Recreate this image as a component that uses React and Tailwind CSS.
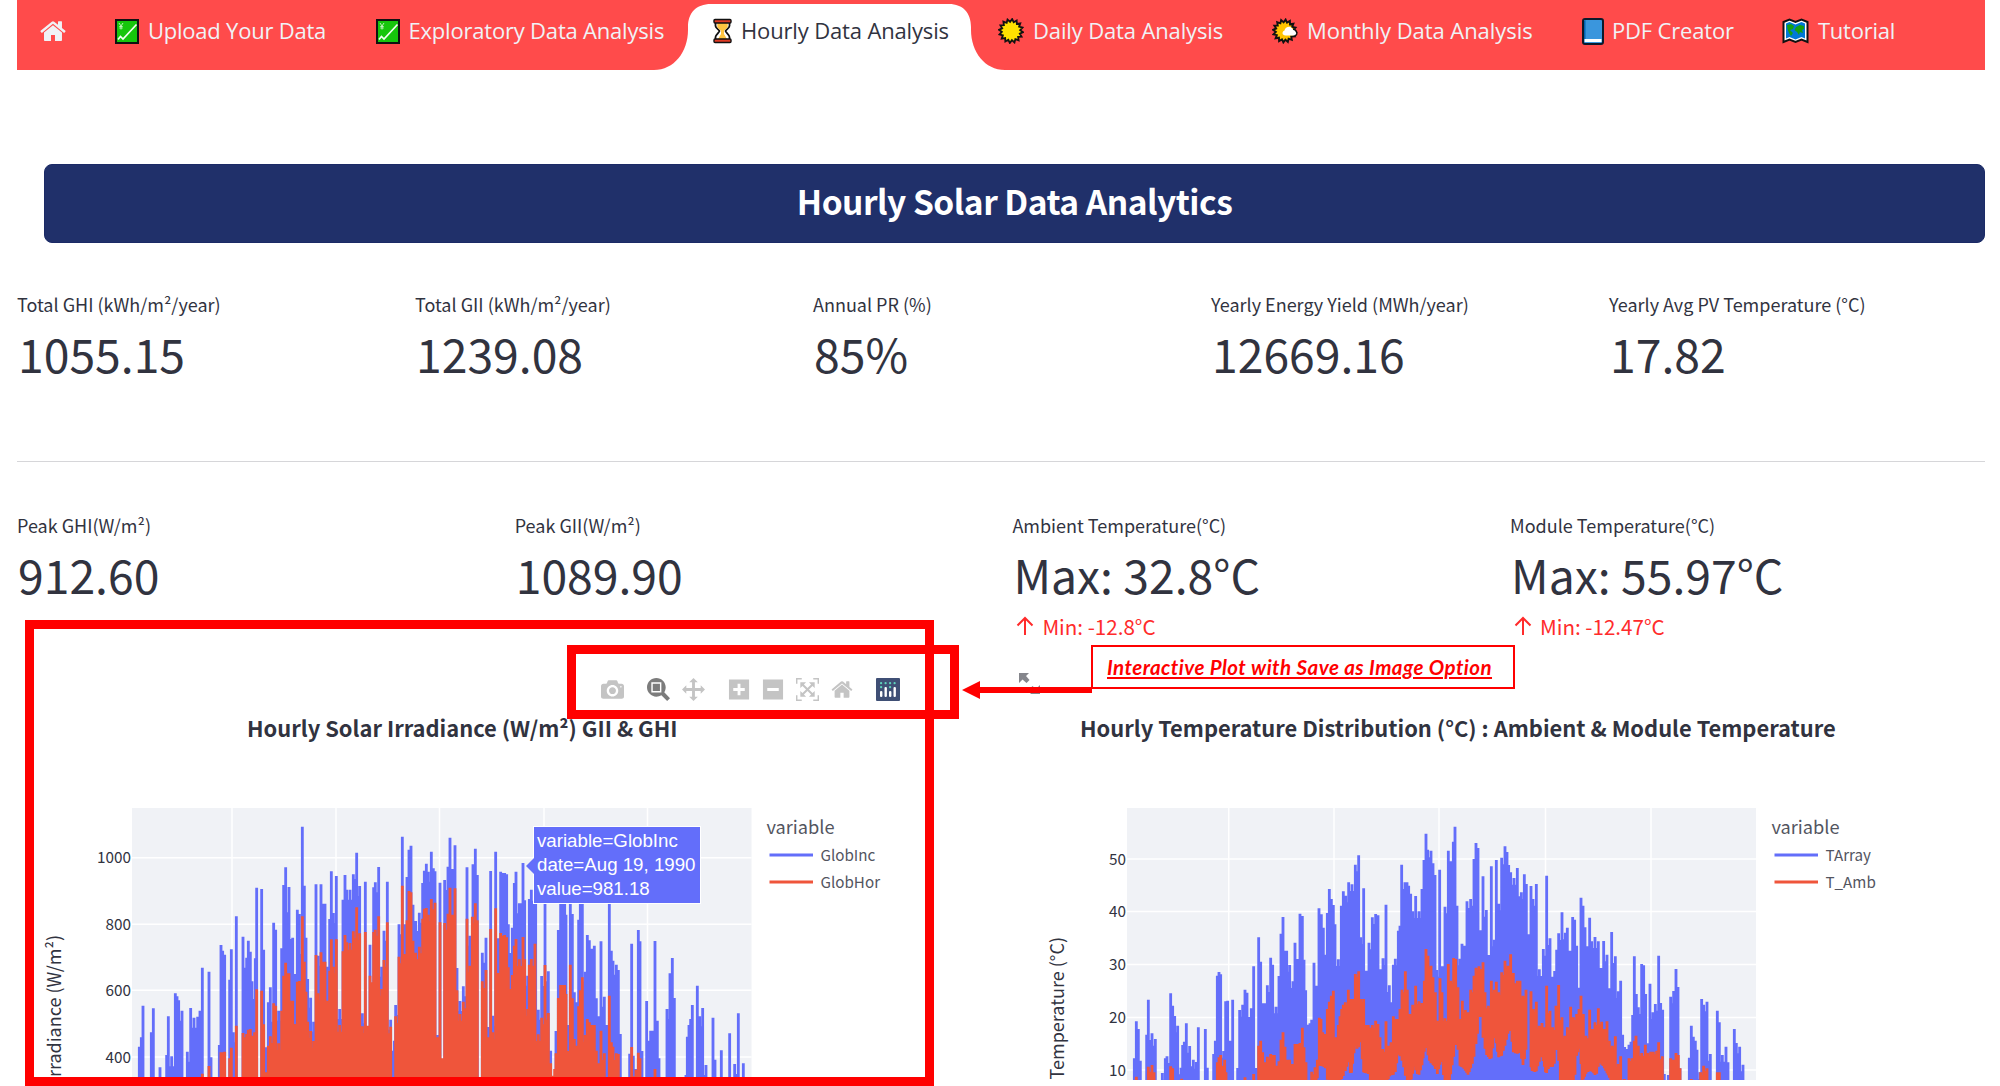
import React from "react";

const CJK = "font-['Noto_Sans_CJK_SC',sans-serif]";

function ChartIcon() {
  return (
    <svg width="24" height="25" viewBox="0 0 24 25">
      <rect x="1" y="1" width="22" height="23" fill="#16c60c" stroke="#111" strokeWidth="2" />
      <path d="M3 20.500 5.500 17.500 8 20 21.500 5.500" fill="none" stroke="#f4fff4" strokeWidth="1.700" />
      <path d="M4 4 6 7 8 4M6 7V10.500M4.300 7.500H7.700M4.300 9H7.700" fill="none" stroke="#c9f5c6" strokeWidth="0.900" />
    </svg>
  );
}

function HourglassIcon() {
  return (
    <svg width="19" height="26" viewBox="0 0 19 26">
      <path d="M2.500 4V8C2.500 10 6.500 12 6.500 13S2.500 17 2.500 19V22H16.500V19C16.500 17 12.500 14 12.500 13S16.500 10 16.500 8V4Z" fill="#fff" stroke="#111" strokeWidth="1.800" />
      <path d="M4.300 5H14.700V8.500C14.500 10.500 11 12 11 13V16L14 21H5L8 16V13C8 12 4.500 10.500 4.300 8.500Z" fill="#ffc440" />
      <rect x="1" y="1.500" width="17" height="3.500" rx="1" fill="#e03a24" stroke="#111" strokeWidth="1.400" />
      <rect x="1" y="21" width="17" height="3.500" rx="1" fill="#e03a24" stroke="#111" strokeWidth="1.400" />
    </svg>
  );
}

function burst(cx, cy, outer, inner, n) {
  const pts = [];
  for (let i = 0; i < n * 2; i++) {
    const r = i % 2 ? inner : outer;
    const a = (Math.PI * (i + 0.5)) / n - Math.PI / 2;
    pts.push(`${(cx + r * Math.cos(a)).toFixed(2)},${(cy + r * Math.sin(a)).toFixed(2)}`);
  }
  return pts.join(" ");
}

function SunIcon() {
  return (
    <svg width="26" height="26" viewBox="0 0 26 26">
      <polygon points={burst(13, 13, 12, 9.2, 16)} fill="#ffe100" stroke="#111" strokeWidth="1.800" />
    </svg>
  );
}

function SunCloudIcon() {
  return (
    <svg width="27" height="26" viewBox="0 0 27 26">
      <polygon points={burst(12.5, 13, 11.5, 8.700, 16)} fill="#ffc400" stroke="#111" strokeWidth="1.900" />
      <path d="M13.500 17.500C10 17.500 9.500 13.500 12.500 12.500C13 8.500 19 7 20.500 11C25 11 26.500 17.500 22.500 17.500Z" fill="#fff" />
      <path d="M21 11C25 11.500 26.500 17.500 22.500 17.800" fill="none" stroke="#111" strokeWidth="1.400" />
    </svg>
  );
}

function BookIcon() {
  return (
    <svg width="22" height="27" viewBox="0 0 22 27">
      <rect x="1" y="1" width="20" height="25" rx="2" fill="#3a96dd" stroke="#0b1a2b" strokeWidth="2" />
      <path d="M2 3V24H3.500V2Z" fill="#0063b1" />
      <rect x="2.500" y="21" width="17" height="3" fill="#fff" />
    </svg>
  );
}

function MapIcon() {
  return (
    <svg width="27" height="26" viewBox="0 0 27 26">
      <path d="M1.500 4 7.500 1.500 13.500 4 19.500 1.500 25.500 4V24L19.500 21.500 13.500 24 7.500 21.500 1.500 24Z" fill="#fff" stroke="#111" strokeWidth="2" />
      <path d="M4 5.500 7.500 4 13.500 6.500 19.500 4 23 5.500V20.500L19.500 19 13.500 21.500 7.500 19 4 20.500Z" fill="#0078d7" />
      <path d="M5 7 9 6 12 8 11 11 8 12 11 15 9 18 7 15 5.500 11ZM14 9 18 7 22 8V11L20 12 21 15 18 14 17 17 15 14 12.500 12Z" fill="#16a010" />
    </svg>
  );
}

const HOME =
  "m786 296v-267q0-15-11-26t-25-10h-214v214h-143v-214h-214q-15 0-25 10t-11 26v267q0 1 0 2t0 2l321 264 321-264q1-1 1-4z m124 39l-34-41q-5-5-12-6h-2q-7 0-12 3l-386 322-386-322q-7-4-13-4-7 2-12 7l-35 41q-4 5-3 13t6 12l401 334q18 15 42 15t43-15l136-114v109q0 8 5 13t13 5h107q8 0 13-5t5-13v-227l122-102q5-5 6-12t-4-13z";

const tabText = "relative top-[-1px] font-['Open_Sans',sans-serif] text-[22px] whitespace-nowrap";

function Tab({ className, icon, gap, children }) {
  return (
    <div className={`flex h-[62px] items-center ${className}`}>
      <span className="shrink-0">{icon}</span>
      <span className={`${tabText} ${gap}`}>{children}</span>
    </div>
  );
}

function Nav() {
  return (
    <nav className="ml-[17px] flex h-[70px] w-[1968px] bg-[#ff4b4b] text-[#f0f2f6]">
      <div className="h-[62px] w-[73px] pt-[19px] pl-[23px]">
        <svg width="26" height="22" viewBox="0 60 930 800" preserveAspectRatio="none">
          <path d={HOME} transform="matrix(1 0 0 -1 0 850)" fill="#f0f2f6" />
        </svg>
      </div>
      <Tab className="w-[260px] pl-[25px]" gap="ml-[9px] tracking-[-0.230px]" icon={<ChartIcon />}>Upload Your Data</Tab>
      <Tab className="w-[338px] pl-[25.500px]" gap="ml-[9px] tracking-[-0.200px]" icon={<ChartIcon />}>Exploratory Data Analysis</Tab>
      <div className="relative h-[70px] w-[283px]">
        <svg className="absolute left-[-34px] top-0" width="351" height="70" viewBox="0 0 351 70">
          <path d="M0 70C20 70 34 52 34 30V27C34 13 42 4 57 4H295C309 4 317 13 317 27V30C317 52 331 70 351 70Z" fill="#fff" />
        </svg>
        <div className="relative text-[#31333f]">
          <Tab className="pl-[25px]" gap="ml-[9px] tracking-[-0.150px]" icon={<HourglassIcon />}>Hourly Data Analysis</Tab>
        </div>
      </div>
      <Tab className="w-[275px] pl-[27px]" gap="ml-[9px] tracking-[-0.140px]" icon={<SunIcon />}>Daily Data Analysis</Tab>
      <Tab className="w-[309px] pl-[26px]" gap="ml-[8px] tracking-[-0.060px]" icon={<SunCloudIcon />}>Monthly Data Analysis</Tab>
      <Tab className="w-[200px] pl-[27px]" gap="ml-[8px] tracking-[-0.180px]" icon={<BookIcon />}>PDF Creator</Tab>
      <Tab className="pl-[27px]" gap="ml-[9px] tracking-[-0.250px]" icon={<MapIcon />}>Tutorial</Tab>
    </nav>
  );
}

function Metric({ label, value, delta }) {
  return (
    <div className="text-[#31333f]">
      <div className="h-[28px] text-[18px] leading-[28px] whitespace-nowrap">{label}</div>
      <div className="mt-[5px] h-[60px] pl-[1px] text-[46.300px] leading-[60px] whitespace-nowrap">{value}</div>
      {delta && (
        <div className="flex items-center pt-[10px] pl-[4px] text-[#ff2b2b]">
          <svg width="18" height="20" viewBox="0 0 18 20">
            <path d="M9 19V2M1.500 9.500 9 2 16.500 9.500" fill="none" stroke="#ff2b2b" strokeWidth="2" />
          </svg>
          <span className="ml-[8px] text-[20.600px] leading-[24px] whitespace-nowrap">{delta}</span>
        </div>
      )}
    </div>
  );
}

const globIncA =
  "418:803 424:775 429:680 454:760 460:688 480:865 500:828 505:712 515:832 526:643 531:652 536:664 546:695 562:818 572:687 582:716 593:713 600:695 607:566 627:578 633:835 658:798 663:498 668:515 674:527 689:602 694:511 700:760 709:412 729:473 740:536 745:485 751:518 756:607 761:660 766:538 770:326 785:330 791:512 797:805 805:670 811:625 816:728 821:431 827:452 836:695 845:508 851:318 857:265 862:400 867:324 873:480 878:476 885:585 892:392 898:405 903:525 907:143 913:320 918:476 923:600 932:656 941:728 948:316 954:530 963:316 969:374 975:374 982:563 989:420 994:277 1000:402 1009:291 1019:690 1029:362 1035:288 1040:332 1050:332 1060:286 1065:300 1070:221 1079:321 1087:703 1096:308 1110:497 1116:765 1121:325 1126:310 1131:340 1136:264 1145:563 1152:455 1162:308 1172:722 1183:785 1187:678 1197:436 1207:173 1213:436 1221:294 1227:212 1233:200 1239:377 1247:426 1258:401 1268:312 1273:275 1279:254 1285:278 1294:218 1300:268 1305:277 1312:768 1320:311 ";
const globIncB =
  "14:303 24:263 30:176 38:270 45:199 51:567 60:666 70:622 81:265 90:470 99:256 106:209 112:288 127:521 138:476 146:744 152:276 158:710 167:218 174:478 182:278 188:282 194:282 200:286 205:436 209:522 217:446 223:312 228:278 238:373 243:373 249:252 254:364 263:590 268:360 274:332 281:365 287:365 295:692 305:591 315:365 325:577 332:815 348:756 355:453 362:360 368:355 374:365 378:407 385:738 391:365 397:405 403:640 416:422 421:365 427:365 436:578 442:468 448:484 456:509 463:500 469:658 477:712 483:487 493:653 500:738 508:360 514:515 519:545 529:557 535:573 541:765 569:824 575:494 580:830 588:870 595:453 600:487 606:816 620:666 632:755 638:755 645:486 652:725 657:838 681:690 690:583 697:537 703:657 738:888 742:773 747:738 752:720 757:678 772:620 779:712 788:687 798:858 819:716 825:842 844:814 869:763 884:855 895:703 910:853";
const globHorA =
  "607:884 627:861 663:820 668:820 674:818 689:838 694:806 709:740 729:762 735:775 740:765 745:752 751:750 757:770 764:760 770:631 785:635 791:736 797:880 805:800 811:772 821:673 827:680 836:793 845:695 851:590 857:551 862:583 867:583 873:665 878:665 885:735 892:608 898:606 907:412 913:548 918:638 923:728 932:756 941:786 948:528 954:643 963:520 969:548 975:548 982:665 989:575 994:481 1000:563 1009:481 1019:738 1029:517 1035:468 1040:490 1050:492 1060:457 1070:385 1079:463 1087:742 1096:459 1103:740 1110:590 1121:459 1126:452 1131:470 1136:412 1145:630 1152:543 1162:430 1172:743 1187:712 1197:533 1207:320 1213:525 1221:424 1227:336 1233:340 1239:485 1247:521 1258:503 1268:419 1273:389 1279:387 1285:407 1294:360 1305:371 1312:775 1320:430 1327:838 ";
const globHorB =
  "14:432 24:404 30:326 38:407 45:328 51:634 60:705 70:668 81:419 90:560 97:413 106:373 112:424 127:607 138:573 146:775 152:450 158:760 167:388 174:582 182:462 188:470 194:468 200:475 205:565 209:630 217:588 223:500 228:480 238:541 249:474 254:541 263:690 268:557 274:540 285:494 295:766 305:716 315:558 325:702 332:853 344:870 348:823 355:657 362:618 368:618 374:618 378:645 385:816 391:557 397:658 403:780 416:682 421:634 427:595 436:768 442:720 448:730 456:738 463:738 469:815 477:853 483:755 493:823 508:650 514:790 519:803 529:823 535:825 575:804 588:872 595:821 600:838 645:870";
const tArrayA =
  "313:838 319:727 325:750 331:845 350:767 355:662 366:763 376:780 397:882 406:838 411:832 422:643 428:680 434:711 443:740 453:866 458:798 463:788 469:733 479:801 490:842 499:849 505:745 526:750 532:866 551:825 556:785 562:590 567:579 572:586 581:816 587:667 593:665 601:785 608:662 623:867 629:693 638:677 645:632 651:641 657:714 664:688 671:562 678:867 686:475 692:548 698:673 706:673 712:619 722:536 728:557 738:683 747:591 753:464 759:414 764:515 770:515 779:558 789:607 795:491 802:540 810:404 817:411 822:542 827:634 835:737 840:733 845:722 852:551 860:620 867:388 874:406 880:446 886:527 892:402 898:330 904:360 910:378 915:436 925:541 934:380 940:337 947:350 956:310 966:316 976:257 986:229 992:475 1001:328 1009:575 1017:491 1027:415 1037:405 1044:409 1052:571 1059:538 1068:377 1078:619 1084:670 1090:557 1096:539 1105:455 1110:440 1115:257 1125:310 1131:310 1136:320 1142:344 1148:397 1157:351 1167:397 1176:330 1182:243 1188:164 1193:212 1203:215 1209:253 1215:288 1220:573 1229:272 1237:562 1245:383 1255:215 1262:247 1270:188 1275:143 1281:380 1290:539 1296:494 1303:500 1311:367 1322:360 1332:240 1338:192 1344:207 1351:454 1359:292 1369:393 1377:528 1384:262 1393:482 1399:243 1406:374 1415:236 1425:202 1431:219 1436:258 1442:280 1452:297 1462:267 1468:352 1474:340 1483:286 ";
const tArrayB =
  "139:315 145:466 153:321 159:360 169:315 178:571 190:510 200:290 210:478 217:593 224:576 230:512 236:463 246:400 256:461 262:446 270:515 278:414 284:422 290:500 296:626 303:356 309:380 315:445 321:502 329:416 335:487 345:474 355:487 363:567 371:486 381:527 388:628 395:459 406:532 415:637 422:605 428:767 434:804 440:810 447:797 453:788 458:708 463:532 469:645 475:685 485:555 491:559 497:645 502:793 510:614 519:700 526:675 536:530 542:672 548:692 553:885 565:888 572:653 581:636 588:570 594:624 600:868 628:836 634:740 640:773 646:785 651:812 660:880 665:660 671:677 681:668 691:825 712:695 718:730 727:828 738:803 744:850 763:750 769:792 779:803 789:857";
const tAmbA =
  "319:893 355:863 360:878 366:858 372:880 422:862 428:868 455:899 562:850 567:835 572:828 578:860 584:842 588:880 645:895 671:885 686:800 692:785 698:820 706:850 712:833 722:825 728:828 733:828 740:860 747:847 753:782 759:760 765:803 771:842 779:842 787:855 795:795 802:795 810:792 817:746 822:805 828:850 845:878 855:865 862:842 868:716 873:720 878:760 886:765 892:690 898:668 904:650 910:635 917:775 925:738 930:712 935:690 940:677 946:670 955:632 961:660 968:660 976:585 986:577 992:660 1001:660 1009:738 1015:738 1027:738 1037:725 1044:735 1050:775 1058:810 1068:727 1075:800 1083:790 1090:712 1096:720 1104:720 1110:690 1116:632 1126:577 1132:632 1140:705 1148:677 1157:620 1167:667 1176:672 1183:605 1188:510 1194:530 1203:560 1209:595 1216:640 1222:725 1230:598 1236:640 1245:718 1255:555 1262:605 1271:537 1277:540 1284:625 1290:720 1297:665 1306:693 1314:700 1322:632 1332:590 1338:566 1347:562 1359:550 1365:640 1375:680 1384:605 1393:632 1399:608 1406:640 1415:580 1425:545 1434:560 1442:526 1450:582 1462:605 1470:605 1479:650 1488:632 ";
const tAmbB =
  "153:637 160:690 169:668 178:740 186:732 193:745 200:620 210:695 218:745 228:680 236:618 246:715 255:770 262:745 272:683 280:715 290:705 297:690 303:650 310:705 318:770 329:692 337:750 345:730 355:688 365:728 373:750 381:727 388:785 397:800 406:772 415:855 422:832 433:900 447:838 457:838 463:785 468:770 475:800 485:822 496:797 503:822 512:818 520:818 530:815 536:790 547:832 572:838 580:842 588:822 595:828 600:868 634:900 662:880 671:860 681:868 712:880 718:880";
const tAmbLowA =
  "0:910 860:910 868:860 880:862 888:870 893:910 930:910 943:885 955:850 963:892 975:800 983:812 992:790 1000:880 1015:885 1020:910 1070:910 1080:890 1095:885 1105:820 1118:850 1130:910 1145:900 1152:862 1165:892 1175:865 1186:800 1200:850 1213:862 1222:885 1235:840 1243:910 1258:910 1268:850 1280:780 1290:860 1303:870 1315:888 1330:845 1342:770 1350:680 1358:770 1368:825 1383:845 1395:765 1405:835 1415:830 1425:800 1440:740 1450:820 1460:825 1470:820 1480:862 ";
const tAmbLowB =
  "140:800 155:875 168:880 185:825 198:887 207:865 222:862 232:780 240:910 283:910 290:830 300:800 306:910 320:880 335:875 348:892 358:850 370:862 385:890 395:910 900:910";

function parse(s, dx) {
  return s.trim().split(" ").map((p) => {
    const [x, y] = p.split(":").map(Number);
    return [x + dx, y];
  });
}

/* Adds a shorter reading between neighbours that are close enough to touch. */
function densify(points, drop) {
  const out = [];
  points.forEach((p, i) => {
    out.push(p);
    const q = points[i + 1];
    if (q && q[0] - p[0] > 6 && q[0] - p[0] <= 13) out.push([(p[0] + q[0]) / 2, Math.max(p[1], q[1]) + drop]);
  });
  return out;
}

function lowAt(low, x) {
  for (let i = 1; i < low.length; i++) {
    if (x <= low[i][0]) {
      const [x0, y0] = low[i - 1];
      const [x1, y1] = low[i];
      return y0 + ((y1 - y0) * (x - x0)) / (x1 - x0);
    }
  }
  return 910;
}

function spikes(points, low) {
  return points
    .map(([x, y]) => {
      const b = low ? Math.max(lowAt(low, x), y + 20) : 910;
      return y < 910 ? `M${x} ${y}V${b.toFixed(0)}` : "";
    })
    .join("");
}

const globInc = spikes(densify([...parse(globIncA, 0), ...parse(globIncB, 1320)], 30));
const globHor = spikes(densify([...parse(globHorA, 0), ...parse(globHorB, 1320)], 20));
const tArray = spikes(densify([...parse(tArrayA, 0), ...parse(tArrayB, 1350)], 20));
const tAmb = spikes(
  densify([...parse(tAmbA, 0), ...parse(tAmbB, 1350)], 8),
  [...parse(tAmbLowA, 0), ...parse(tAmbLowB, 1350)]
);

const svgFont = "font-['Noto_Sans_CJK_SC',sans-serif]";

function Plot({ originX, width, left, right, vlines, ticks, tickX, dataX, series, axis, axisX, axisY, legendX, names }) {
  return (
    <svg className="block" width={width} height="301" viewBox={`${originX} 780 ${width} 301`}>
      <rect x={left} y="809" width={right - left} height="280" fill="#f0f2f6" />
      {vlines.map((x) => <line key={x} x1={x} x2={x} y1="809" y2="1090" stroke="#fff" strokeWidth="1.500" />)}
      {ticks.map(([y]) => <line key={y} x1={left} x2={right} y1={y} y2={y} stroke="#fff" strokeWidth="1.500" />)}
      <g transform={`translate(${dataX} 780) scale(0.33333)`} fill="none" strokeWidth="8.500">
        <path d={series[0]} stroke="#636efa" />
        <path d={series[1]} stroke="#ef553b" />
      </g>
      {ticks.map(([y, t]) => (
        <text key={t} x={tickX} y={y + 5.7} textAnchor="end" className={`${svgFont} text-[15.300px]`} fill="#31333f">{t}</text>
      ))}
      <text transform={`translate(${axisX} ${axisY}) rotate(-90)`} textAnchor="end" className={`${svgFont} text-[18px]`} fill="#31333f">{axis}</text>
      <text x={legendX + 0.5} y="834.500" className={`${svgFont} text-[18.200px]`} fill="#53555f">variable</text>
      <line x1={legendX + 3.5} x2={legendX + 47} y1="856" y2="856" stroke="#636efa" strokeWidth="3" />
      <line x1={legendX + 3.5} x2={legendX + 47} y1="883" y2="883" stroke="#ef553b" strokeWidth="3" />
      <text x={legendX + 54.5} y="862" className={`${svgFont} text-[15.200px]`} fill="#53555f">{names[0]}</text>
      <text x={legendX + 54.5} y="888.500" className={`${svgFont} text-[15.200px]`} fill="#53555f">{names[1]}</text>
    </svg>
  );
}

function PlotlyIcon({ d, w = 1000, color = "#c4c4c4", size = 23 }) {
  return (
    <svg width={size} height="23" viewBox={`0 0 ${w} 1000`}>
      <path d={d} transform="matrix(1 0 0 -1 0 850)" fill={color} />
    </svg>
  );
}

const CAMERA =
  "m500 450c-83 0-150-67-150-150 0-83 67-150 150-150 83 0 150 67 150 150 0 83-67 150-150 150z m400 150h-120c-16 0-34 13-39 29l-31 93c-6 15-23 28-40 28h-340c-16 0-34-13-39-28l-31-94c-6-15-23-28-40-28h-120c-55 0-100-45-100-100v-450c0-55 45-100 100-100h800c55 0 100 45 100 100v450c0 55-45 100-100 100z m-400-550c-138 0-250 112-250 250 0 138 112 250 250 250 138 0 250-112 250-250 0-138-112-250-250-250z m365 380c-19 0-35 16-35 35 0 19 16 35 35 35 19 0 35-16 35-35 0-19-16-35-35-35z";
const ZOOM =
  "m1000-25l-250 251c40 63 63 138 63 218 0 224-182 406-407 406-224 0-406-182-406-406s183-406 407-406c80 0 155 22 218 62l250-250 125 125z m-812 250l0 438 437 0 0-438-437 0z m62 375l313 0 0-312-313 0 0 312z";
const PAN =
  "m1000 350l-187 188 0-125-250 0 0 250 125 0-188 187-187-187 125 0 0-250-250 0 0 125-188-188 186-187 0 125 252 0 0-250-125 0 187-188 188 188-125 0 0 250 250 0 0-126 187 188z";
const PLUS =
  "m1 787l0-875 875 0 0 875-875 0z m687-500l-187 0 0-187-125 0 0 187-188 0 0 125 188 0 0 187 125 0 0-187 187 0 0-125z";
const MINUS = "m0 788l0-876 875 0 0 876-875 0z m688-500l-500 0 0 125 500 0 0-125z";
const AUTOSCALE =
  "m250 850l-187 0-63 0 0-62 0-188 63 0 0 188 187 0 0 62z m688 0l-188 0 0-62 188 0 0-188 62 0 0 188 0 62-62 0z m-875-938l0 188-63 0 0-188 0-62 63 0 187 0 0 62-187 0z m875 188l0-188-188 0 0-62 188 0 62 0 0 62 0 188-62 0z m-125 188l-1 0-93-94-156 156 156 156 92-93 2 0 0 250-250 0 0-2 93-92-156-156-156 156 94 92 0 2-250 0 0-250 0 0 93 93 157-156-157-156-93 94 0 0 0-250 250 0 0 0-94 93 156 157 156-157-93-93 0 0 250 0 0 250z";

function PlotlyLogo() {
  return (
    <svg width="24" height="23" viewBox="0 0 24 23">
      <rect width="24" height="23" rx="1" fill="#3f4f75" />
      <g fill="#5fd3bc">
        {[5, 9.500, 14, 18.500].map((x) => <rect key={x} x={x - 1} y="4" width="2.200" height="2.200" rx="1" />)}
        <rect x="4" y="8" width="2.200" height="2.200" rx="1" />
        <rect x="13" y="8" width="2.200" height="2.200" rx="1" />
      </g>
      <g fill="#fff">
        <rect x="4" y="13" width="2.400" height="6" rx="1" />
        <rect x="8.500" y="9" width="2.400" height="10" rx="1" />
        <rect x="13" y="13" width="2.400" height="6" rx="1" />
        <rect x="17.500" y="9" width="2.400" height="10" rx="1" />
      </g>
    </svg>
  );
}

function ModeBar() {
  return (
    <div className="flex h-[23px] items-center">
      <PlotlyIcon d={CAMERA} />
      <div className="ml-[23px] flex gap-[12px]">
        <PlotlyIcon d={ZOOM} color="#7c7c7c" />
        <PlotlyIcon d={PAN} />
      </div>
      <div className="ml-[23px] flex items-center gap-[12px]">
        <PlotlyIcon d={PLUS} w={875} size={22} />
        <PlotlyIcon d={MINUS} w={875} size={22} />
        <PlotlyIcon d={AUTOSCALE} />
        <PlotlyIcon d={HOME} w={928} size={22} />
      </div>
      <div className="ml-[23px]"><PlotlyLogo /></div>
    </div>
  );
}

function Annotations() {
  return (
    <>
      <div className="absolute left-[25px] top-[620px] h-[466px] w-[909px] border-[9px] border-[#ff0000]" />
      <div className="absolute left-[567px] top-[645px] h-[74px] w-[392px] border-[9px] border-[#ff0000]" />
      <svg className="absolute left-[962px] top-[680px]" width="130" height="20" viewBox="0 0 130 20">
        <path d="M0 10 18 1V7H130V13H18V19Z" fill="#ff0000" />
      </svg>
      <div className="absolute left-[1091px] top-[645px] flex h-[44px] w-[424px] items-center border-2 border-[#ff0000] bg-white pl-[14px]">
        <span className="font-['Lato',sans-serif] text-[20.500px] font-bold tracking-[0.440px] whitespace-nowrap text-[#ff0000] italic underline decoration-[1.500px] underline-offset-[2px]">
          Interactive Plot with Save as Image Option
        </span>
      </div>
      <div className="absolute left-[533px] top-[826px] h-[78px] w-[168px] border border-white bg-[#636efa] pt-[2px] pl-[3px] font-['Liberation_Sans',sans-serif] text-[18.700px] leading-[24.200px] whitespace-nowrap text-white">
        <div>variable=GlobInc</div>
        <div>date=Aug 19, 1990</div>
        <div>value=981.18</div>
        <svg className="absolute left-[-8px] top-[30px]" width="9" height="18" viewBox="0 0 9 18">
          <path d="M9 0V18L0 9Z" fill="#636efa" />
        </svg>
      </div>
    </>
  );
}

const titleText = "text-[21.900px] leading-[30px] font-bold whitespace-nowrap text-[#31333f]";

export default function App() {
  return (
    <div className={`relative h-[1086px] w-[2000px] overflow-hidden bg-white ${CJK}`}>
      <Nav />
      <h1 className="mt-[94px] ml-[44px] flex h-[79px] w-[1941px] items-center justify-center rounded-[8px] border border-[#1b2a66] bg-[#20306a] pb-[4px] text-[33.500px] font-bold tracking-[-0.500px] text-white">
        Hourly Solar Data Analytics
      </h1>
      <section className="mt-[47px] ml-[17px] grid grid-cols-[repeat(5,398px)]">
        <Metric label="Total GHI (kWh/m²/year)" value="1055.15" />
        <Metric label="Total GII (kWh/m²/year)" value="1239.08" />
        <Metric label="Annual PR (%)" value="85%" />
        <Metric label="Yearly Energy Yield (MWh/year)" value="12669.16" />
        <Metric label="Yearly Avg PV Temperature (°C)" value="17.82" />
      </section>
      <hr className="mt-[78px] ml-[17px] w-[1968px] border-t-[1.500px] border-[#d6d6d9]" />
      <section className="mt-[49px] ml-[17px] grid h-[138px] grid-cols-[repeat(4,497.700px)]">
        <Metric label="Peak GHI(W/m²)" value="912.60" />
        <Metric label="Peak GII(W/m²)" value="1089.90" />
        <Metric label="Ambient Temperature(°C)" value="Max: 32.8°C" delta="Min: -12.8°C" />
        <Metric label="Module Temperature(°C)" value="Max: 55.97°C" delta="Min: -12.47°C" />
      </section>
      <section className="mt-[29px] flex">
        <div className="w-[1000px]">
          <div className="h-[23px] pl-[601px]"><ModeBar /></div>
          <h2 className={`mt-[12px] h-[66px] pl-[247px] ${titleText}`}>Hourly Solar Irradiance (W/m²) GII &amp; GHI</h2>
          <Plot
            originX={0} width={1000} left={132} right={751.5}
            vlines={[232, 336, 439.500, 544, 647.500]}
            ticks={[[858.700, "1000"], [925.300, "800"], [991.300, "600"], [1058, "400"]]}
            tickX={131} dataX={0} series={[globInc, globHor]}
            axis="Irradiance (W/m²)" axisX={61} axisY={936}
            legendX={766} names={["GlobInc", "GlobHor"]}
          />
        </div>
        <div className="w-[1000px]">
          <div className="h-[23px] pl-[18px]">
            <svg className="relative top-[-6px]" width="24" height="24" viewBox="0 0 24 24">
              <path d="M1 1H11L8 4 11.500 8 8.500 11 4.500 7.500 1 11ZM22 22H12L15 19 12.500 16 14.500 14 18 17 22 13Z" fill="#85868c" />
            </svg>
          </div>
          <h2 className={`mt-[12px] h-[66px] pl-[80px] ${titleText}`}>Hourly Temperature Distribution (°C) : Ambient &amp; Module Temperature</h2>
          <Plot
            originX={1000} width={1000} left={1127} right={1756}
            vlines={[1228.700, 1334, 1439, 1545.500, 1651]}
            ticks={[[860, "50"], [912.500, "40"], [965.500, "30"], [1018.500, "20"], [1071, "10"]]}
            tickX={1126} dataX={1030} series={[tArray, tAmb]}
            axis="Temperature (°C)" axisX={1063.500} axisY={938}
            legendX={1771} names={["TArray", "T_Amb"]}
          />
        </div>
      </section>
      <Annotations />
    </div>
  );
}
